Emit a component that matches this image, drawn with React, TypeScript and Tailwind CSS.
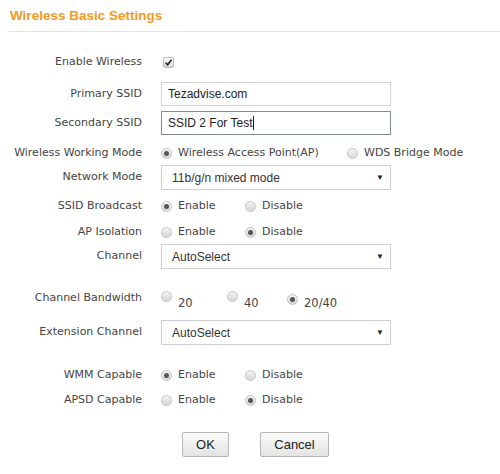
import React from "react";

const labelFont = { fontFamily: '"DejaVu Sans", Tahoma, Verdana, sans-serif' };

function Radio({ checked }: { checked?: boolean }) {
  return (
    <span className="inline-flex h-[11px] w-[11px] shrink-0 items-center justify-center rounded-full border border-[#c4c4c4] bg-gradient-to-b from-[#f4f4f4] to-[#d6d6d6]">
      {checked ? <span className="h-[5px] w-[5px] rounded-full bg-[#555]" /> : null}
    </span>
  );
}

function RadioOpt({ checked, label, w }: { checked?: boolean; label: string; w: string }) {
  return (
    <div className={`flex shrink-0 items-center gap-[6px] whitespace-nowrap ${w}`}>
      <Radio checked={checked} />
      <span className="text-[11px] text-[#444]" style={labelFont}>
        {label}
      </span>
    </div>
  );
}

function Label({ children }: { children: React.ReactNode }) {
  return (
    <div className="w-[143px] shrink-0 pr-[1px] text-right text-[11px] text-[#444]" style={labelFont}>
      {children}
    </div>
  );
}

function Select({ value }: { value: string }) {
  return (
    <div
      className="flex h-[25px] w-[230px] items-center justify-between border border-[#cfcfcf] bg-white pl-[10px] pr-[6px] text-[12px] text-[#333]"
      style={{ fontFamily: '"Liberation Sans", Arial, sans-serif' }}
    >
      <span>{value}</span>
      <span className="text-[8px] text-[#222]">▼</span>
    </div>
  );
}

export default function App() {
  return (
    <div className="h-[474px] w-[500px] bg-white">
      <div className="pl-[10px] pt-[7px]">
        <h1
          className="text-[13.5px] font-bold leading-[18px] text-[#f39a1e]"
          style={{ fontFamily: '"Liberation Sans", Tahoma, Arial, sans-serif' }}
        >
          Wireless Basic Settings
        </h1>
      </div>
      <div className="ml-[8px] mt-[6px] h-px bg-[#e4e4e4]" />

      <div className="flex flex-col">
        <div className="mt-[20px] flex h-[20px] items-center gap-[18px]">
          <Label>Enable Wireless</Label>
          <span className="ml-[2px] flex h-[11px] w-[11px] items-center justify-center rounded-[2px] border border-[#bbb] bg-gradient-to-b from-[#fafafa] to-[#dcdcdc]">
            <svg viewBox="0 0 10 10" className="h-[9px] w-[9px]">
              <path d="M1.8 5.2 L4 7.6 L8.4 2" fill="none" stroke="#333" strokeWidth="1.9" />
            </svg>
          </span>
        </div>

        <div className="mt-[10px] flex h-[24px] items-center gap-[18px]">
          <Label>Primary SSID</Label>
          <div
            className="flex h-[24px] w-[230px] items-center border border-[#d4d4d4] bg-white pl-[6px] text-[12px] text-[#222]"
            style={{ fontFamily: '"Liberation Sans", Arial, sans-serif' }}
          >
            Tezadvise.com
          </div>
        </div>

        <div className="mt-[5px] flex h-[24px] items-center gap-[18px]">
          <Label>Secondary SSID</Label>
          <div
            className="flex h-[24px] w-[230px] items-center border border-[#7c8b9c] bg-white pl-[6px] text-[12px] text-[#222]"
            style={{ fontFamily: '"Liberation Sans", Arial, sans-serif' }}
          >
            SSID 2 For Test
            <span className="ml-[1px] h-[14px] w-px bg-[#222]" />
          </div>
        </div>

        <div className="mt-[8px] flex h-[20px] items-center gap-[18px]">
          <Label>Wireless Working Mode</Label>
          <div className="flex items-center">
            <RadioOpt checked label="Wireless Access Point(AP)" w="w-[186px]" />
            <RadioOpt label="WDS Bridge Mode" w="w-[130px]" />
          </div>
        </div>

        <div className="mt-[2px] flex h-[25px] items-center gap-[18px]">
          <Label>Network Mode</Label>
          <Select value="11b/g/n mixed mode" />
        </div>

        <div className="mt-[6px] flex h-[20px] items-center gap-[18px]">
          <Label>SSID Broadcast</Label>
          <div className="flex items-center">
            <RadioOpt checked label="Enable" w="w-[84px]" />
            <RadioOpt label="Disable" w="w-[80px]" />
          </div>
        </div>

        <div className="mt-[6px] flex h-[20px] items-center gap-[18px]">
          <Label>AP Isolation</Label>
          <div className="flex items-center">
            <RadioOpt label="Enable" w="w-[84px]" />
            <RadioOpt checked label="Disable" w="w-[80px]" />
          </div>
        </div>

        <div className="mt-[2px] flex h-[25px] items-center gap-[18px]">
          <Label>Channel</Label>
          <Select value="AutoSelect" />
        </div>

        <div className="mt-[19px] flex h-[20px] items-center gap-[18px]">
          <Label>Channel Bandwidth</Label>
          <div className="flex items-end">
            <div className="flex w-[66px] items-end gap-[6px]">
              <span className="mb-[5px]">
                <Radio />
              </span>
              <span className="text-[11.5px] text-[#444]" style={labelFont}>20</span>
            </div>
            <div className="flex w-[60px] items-end gap-[6px]">
              <span className="mb-[5px]">
                <Radio />
              </span>
              <span className="text-[11.5px] text-[#444]" style={labelFont}>40</span>
            </div>
            <div className="flex items-end gap-[6px]">
              <span className="mb-[5px]">
                <Radio checked />
              </span>
              <span className="text-[11.5px] text-[#444]" style={labelFont}>20/40</span>
            </div>
          </div>
        </div>

        <div className="mt-[12px] flex h-[25px] items-center gap-[18px]">
          <Label>Extension Channel</Label>
          <Select value="AutoSelect" />
        </div>

        <div className="mt-[20px] flex h-[20px] items-center gap-[18px]">
          <Label>WMM Capable</Label>
          <div className="flex items-center">
            <RadioOpt checked label="Enable" w="w-[84px]" />
            <RadioOpt label="Disable" w="w-[80px]" />
          </div>
        </div>

        <div className="mt-[5px] flex h-[20px] items-center gap-[18px]">
          <Label>APSD Capable</Label>
          <div className="flex items-center">
            <RadioOpt label="Enable" w="w-[84px]" />
            <RadioOpt checked label="Disable" w="w-[80px]" />
          </div>
        </div>

        <div
          className="ml-[182px] mt-[22px] flex gap-[31px] text-[13px] text-[#222]"
          style={{ fontFamily: '"Liberation Sans", Arial, sans-serif' }}
        >
          <button className="h-[25px] w-[47px] rounded-[2px] border border-[#b5b5b5] bg-gradient-to-b from-[#fbfbfb] to-[#e3e3e3]">
            OK
          </button>
          <button className="h-[25px] w-[69px] rounded-[2px] border border-[#b5b5b5] bg-gradient-to-b from-[#fbfbfb] to-[#e3e3e3]">
            Cancel
          </button>
        </div>
      </div>
    </div>
  );
}
